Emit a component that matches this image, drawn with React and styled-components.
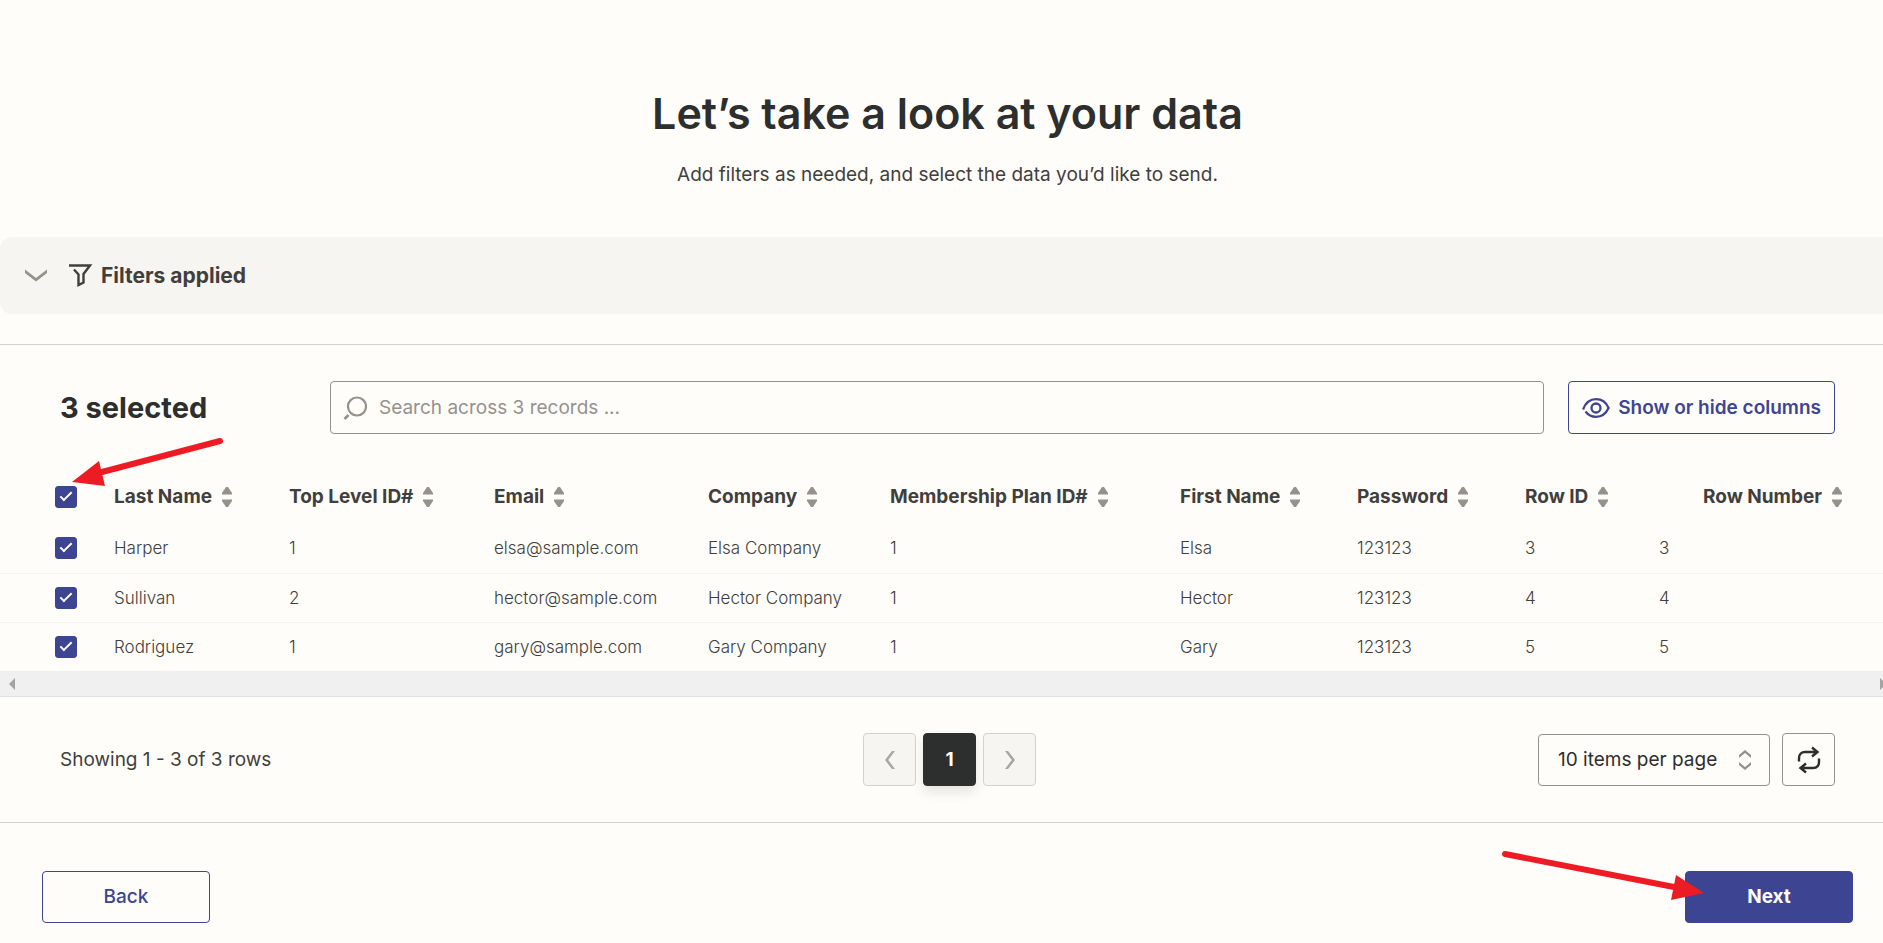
import React, { useState } from "react";
import styled, { createGlobalStyle } from "styled-components";

const colors = {
  page: "#fffdf9",
  panel: "#f6f5f2",
  ink: "#2d2e2e",
  text: "#403f3e",
  muted: "#95928e",
  line: "#d3d1cd",
  rowLine: "#f3f3f1",
  blue: "#3d4592",
  red: "#ed1c24",
};

const columns = [
  { key: "lastName", label: "Last Name", width: 175 },
  { key: "topLevelId", label: "Top Level ID#", width: 205 },
  { key: "email", label: "Email", width: 214 },
  { key: "company", label: "Company", width: 182 },
  { key: "planId", label: "Membership Plan ID#", width: 290 },
  { key: "firstName", label: "First Name", width: 177 },
  { key: "password", label: "Password", width: 168 },
  { key: "rowId", label: "Row ID", width: 134 },
  { key: "rowNumber", label: "Row Number", end: true },
];

const records = [
  { lastName: "Harper", topLevelId: 1, email: "elsa@sample.com", company: "Elsa Company", planId: 1, firstName: "Elsa", password: "123123", rowId: 3, rowNumber: 3 },
  { lastName: "Sullivan", topLevelId: 2, email: "hector@sample.com", company: "Hector Company", planId: 1, firstName: "Hector", password: "123123", rowId: 4, rowNumber: 4 },
  { lastName: "Rodriguez", topLevelId: 1, email: "gary@sample.com", company: "Gary Company", planId: 1, firstName: "Gary", password: "123123", rowId: 5, rowNumber: 5 },
];

const SortIcon = () => (
  <svg width="10" height="20" viewBox="0 0 10 20" fill="currentColor" aria-hidden="true">
    <path d="M4 0h2l4 6v1.500H0V6z" />
    <path d="M4 20h2l4-6v-1.500H0V14z" />
  </svg>
);

const App = () => {
  const [selected, setSelected] = useState(records.map((r) => r.rowId));
  const [search, setSearch] = useState("");
  const allSelected = selected.length === records.length;

  const toggle = (id) => {
    setSelected(selected.includes(id) ? selected.filter((s) => s !== id) : [...selected, id]);
  };

  return (
    <Viewport>
      <GlobalStyle />
      <Page>
        <Intro>
          <Title>Let’s take a look at your data</Title>
          <Subtitle>Add filters as needed, and select the data you’d like to send.</Subtitle>
        </Intro>
        <Filters type="button" aria-expanded="false">
          <Chevron width="22" height="13" viewBox="0 0 22 13" aria-hidden="true">
            <path d="M0 .5 11 9 22 .5V4L11 12.500 0 4z" fill="currentColor" />
          </Chevron>
          <svg width="24" height="23" viewBox="0 0 24 23" fill="none" stroke="currentColor" strokeWidth="2.4" aria-hidden="true">
            <path d="M0 1.500h21l-6.500 8.500v8.500l-5 2.500V10.500L5 5.500" />
          </svg>
          Filters applied
        </Filters>

        <DataSection>
          <Toolbar>
            <Count>{selected.length} selected</Count>
            <SearchBox>
              <svg width="24" height="24" viewBox="0 0 24 24" fill="none" stroke="currentColor" strokeWidth="2.2" aria-hidden="true">
                <circle cx="14" cy="10.500" r="9" />
                <path d="M5.500 19 1.500 23" strokeWidth="2.6" />
              </svg>
              <SearchInput
                type="text"
                aria-label="Search records"
                placeholder="Search across 3 records ..."
                value={search}
                onChange={(ev) => setSearch(ev.target.value)}
              />
            </SearchBox>
            <ColumnsButton type="button">
              <svg width="28" height="20" viewBox="0 0 28 20" fill="none" stroke="currentColor" strokeWidth="2.3" aria-hidden="true">
                <path d="M1 11.500C3.500 5 8.500 1.200 14 1.200S24 4 26.600 10C24 15.500 19.500 18.800 14 18.800c-4.500 0-8-2-10.500-5.300" />
                <circle cx="14" cy="10" r="4.500" />
              </svg>
              Show or hide columns
            </ColumnsButton>
          </Toolbar>

          <Table>
            <colgroup>
              <Col $width={114} />
              {columns.map((c) => (
                <Col key={c.key} $width={c.width} />
              ))}
            </colgroup>
            <thead>
              <tr>
                <CheckHead>
                  <Checkbox
                    aria-label="Select all rows"
                    checked={allSelected}
                    onChange={() => setSelected(allSelected ? [] : records.map((r) => r.rowId))}
                  />
                </CheckHead>
                {columns.map((c) => (
                  <Head key={c.key} $end={c.end}>
                    <SortButton type="button">
                      {c.label}
                      <SortIcon />
                    </SortButton>
                  </Head>
                ))}
              </tr>
            </thead>
            <tbody>
              {records.map((r) => (
                <Row key={r.rowId}>
                  <CheckCell>
                    <Checkbox
                      aria-label={`Select ${r.lastName}`}
                      checked={selected.includes(r.rowId)}
                      onChange={() => toggle(r.rowId)}
                    />
                  </CheckCell>
                  {columns.map((c) => (
                    <Cell key={c.key}>{r[c.key]}</Cell>
                  ))}
                </Row>
              ))}
            </tbody>
          </Table>
          <ScrollTrack>
            <svg width="6" height="12" viewBox="0 0 6 12" aria-hidden="true">
              <path d="M6 0v12L0 6z" fill="currentColor" />
            </svg>
            <svg width="6" height="12" viewBox="0 0 6 12" aria-hidden="true">
              <path d="M0 0v12l6-6z" fill="currentColor" />
            </svg>
          </ScrollTrack>
          {/* points at the select-all checkbox */}
          <SelectArrow width="160" height="60" viewBox="0 0 160 60" aria-hidden="true">
            <path d="M150 10 32 41" stroke={colors.red} strokeWidth="6" strokeLinecap="round" />
            <path d="M2 51 29 30l6 25z" fill={colors.red} />
          </SelectArrow>

          <Pagination>
            <span>Showing 1 - 3 of 3 rows</span>
            <Pages aria-label="Pages">
              <PageButton type="button" disabled aria-label="Previous page">
                <svg width="10" height="18" viewBox="0 0 10 18" aria-hidden="true">
                  <path d="M7 0h3L3.200 9l6.800 9H7L0 9z" fill="currentColor" />
                </svg>
              </PageButton>
              <PageButton type="button" $current aria-current="page">1</PageButton>
              <PageButton type="button" disabled aria-label="Next page">
                <svg width="10" height="18" viewBox="0 0 10 18" aria-hidden="true">
                  <path d="M3 0H0l6.800 9L0 18h3l7-9z" fill="currentColor" />
                </svg>
              </PageButton>
            </Pages>
            <PageSize>
              <SelectBox>
                <Select aria-label="Items per page" defaultValue="10">
                  <option value="10">10 items per page</option>
                  <option value="25">25 items per page</option>
                  <option value="50">50 items per page</option>
                </Select>
                <SelectIcon width="12" height="20" viewBox="0 0 12 20" fill="currentColor" aria-hidden="true">
                  <path d="M6 0l6 5v3L6 3 0 8V5z" />
                  <path d="M6 20l6-5v-3l-6 5-6-5v3z" />
                </SelectIcon>
              </SelectBox>
              <RefreshButton type="button" aria-label="Refresh">
                <svg width="24" height="28" viewBox="0 0 24 28" fill="none" stroke="currentColor" strokeWidth="2.4" aria-hidden="true">
                  <path d="M2 15.500V12c0-4 2.500-6 6-6h12.500M15 1.500 20.500 6 15 10.500" />
                  <path d="M22 12.500V16c0 4-2.500 6-6 6H3.500M9 17.500 3.500 22 9 26.500" />
                </svg>
              </RefreshButton>
            </PageSize>
          </Pagination>
        </DataSection>

        <Footer>
          <FooterButton type="button">Back</FooterButton>
          <NextWrap>
            <FooterButton type="button" $primary>Next</FooterButton>
            <NextArrow width="210" height="60" viewBox="0 0 210 60" aria-hidden="true">
              <path d="M9 12 178 45" stroke={colors.red} strokeWidth="6" strokeLinecap="round" />
              <path d="M208 51 180 33l-5 25z" fill={colors.red} />
            </NextArrow>
          </NextWrap>
        </Footer>
      </Page>
    </Viewport>
  );
};

const GlobalStyle = createGlobalStyle`
  * {
    box-sizing: border-box;
  }

  body {
    background: ${colors.page};
    color: ${colors.text};
    font-family: Inter, "Liberation Sans", sans-serif;
    font-size: 19px;
    line-height: 24px;
    margin: 0;
  }

  button, input, select {
    color: inherit;
    font: inherit;
  }

  svg {
    flex-shrink: 0;
  }
`;

const Viewport = styled.div`
  overflow-x: clip;
`;

// runs on behind the window's right edge
const Page = styled.main`
  margin-right: -12px;
`;

const Intro = styled.header`
  padding: 83px 20px 50px;
  text-align: center;
`;

const Title = styled.h1`
  color: ${colors.ink};
  font-size: 43px;
  font-weight: 600;
  line-height: 60px;
  margin: 0 0 20px;
`;

const Subtitle = styled.p`
  margin: 0;
`;

const Filters = styled.button`
  align-items: center;
  background: ${colors.panel};
  border: none;
  border-radius: 12px;
  display: flex;
  font-size: 21px;
  font-weight: 700;
  gap: 8px;
  height: 77px;
  padding: 0 25px;
  width: 100%;
`;

const Chevron = styled.svg`
  color: ${colors.muted};
  margin-right: 14px;
`;

const DataSection = styled.section`
  border-bottom: 1px solid ${colors.line};
  border-top: 1px solid ${colors.line};
  margin-top: 30px;
  position: relative;
`;

const Toolbar = styled.div`
  align-items: center;
  display: flex;
  gap: 24px;
  padding: 36px 60px 35px;
`;

const Count = styled.h2`
  color: ${colors.ink};
  font-size: 29px;
  font-weight: 700;
  line-height: 36px;
  margin: 0;
  width: 246px;
`;

const SearchBox = styled.label`
  align-items: center;
  border: 1px solid ${colors.muted};
  border-radius: 4px;
  color: ${colors.muted};
  display: flex;
  flex: 1;
  gap: 12px;
  height: 53px;
  padding: 0 12px;
`;

const SearchInput = styled.input`
  background: none;
  border: none;
  color: ${colors.text};
  flex: 1;
  outline: none;
  padding: 0;

  &::placeholder {
    color: ${colors.muted};
    opacity: 1;
  }
`;

const ColumnsButton = styled.button`
  align-items: center;
  background: none;
  border: 1px solid ${colors.blue};
  border-radius: 4px;
  color: ${colors.blue};
  display: flex;
  font-weight: 600;
  gap: 8px;
  height: 53px;
  padding: 0 13px;
`;

const Table = styled.table`
  border-collapse: collapse;
  table-layout: fixed;
  width: 100%;
`;

const Col = styled.col`
  width: ${(p) => (p.$width ? `${p.$width}px` : "auto")};
`;

const Head = styled.th`
  height: 55px;
  padding: 0 ${(p) => (p.$end ? "53px" : "0")} 0 0;
  text-align: ${(p) => (p.$end ? "right" : "left")};
`;

const CheckHead = styled(Head)`
  padding-left: 55px;
`;

const SortButton = styled.button`
  align-items: center;
  background: none;
  border: none;
  display: inline-flex;
  font-weight: 700;
  gap: 10px;
  padding: 0;
  vertical-align: middle;
  white-space: nowrap;

  svg {
    color: ${colors.muted};
  }
`;

const Row = styled.tr`
  & + & {
    border-top: 1px solid ${colors.rowLine};
  }
`;

const Cell = styled.td`
  font-size: 17px;
  font-weight: 300;
  height: 49px;
  padding: 0;
`;

const CheckCell = styled(Cell)`
  padding-left: 55px;
`;

const Checkbox = styled.input.attrs({ type: "checkbox" })`
  appearance: none;
  border: 1px solid ${colors.blue};
  border-radius: 3px;
  display: grid;
  height: 22px;
  margin: 0;
  place-items: center;
  width: 22px;

  &:checked {
    background: ${colors.blue};
  }

  &:checked::before {
    border: solid ${colors.page};
    border-width: 0 0 2px 2px;
    content: "";
    height: 4px;
    margin-bottom: 4px;
    transform: rotate(-45deg);
    width: 10px;
  }
`;

const ScrollTrack = styled.div`
  align-items: center;
  background: #f0f0f0;
  border-bottom: 1px solid #e2e2e2;
  color: #a3a3a3;
  display: flex;
  height: 26px;
  justify-content: space-between;
  padding: 0 9px;
`;

const SelectArrow = styled.svg`
  left: 70px;
  pointer-events: none;
  position: absolute;
  top: 86px;
`;

const Pagination = styled.div`
  align-items: center;
  display: grid;
  grid-template-columns: 1fr auto 1fr;
  padding: 36px 60px;
`;

const Pages = styled.nav`
  display: flex;
  gap: 7px;
  margin-left: 4px;
`;

const PageButton = styled.button`
  align-items: center;
  background: ${(p) => (p.$current ? colors.ink : colors.panel)};
  border: 1px solid ${(p) => (p.$current ? colors.ink : colors.line)};
  border-radius: 4px;
  box-shadow: ${(p) => (p.$current ? "0 6px 12px rgba(45, 46, 46, 0.12)" : "none")};
  color: ${(p) => (p.$current ? colors.page : "#a8a5a2")};
  display: flex;
  font-weight: 700;
  height: 53px;
  justify-content: center;
  padding: 0;
  width: 53px;
`;

const PageSize = styled.div`
  display: flex;
  gap: 12px;
  justify-content: flex-end;
`;

const SelectBox = styled.div`
  align-items: center;
  display: flex;
  position: relative;
`;

const Select = styled.select`
  appearance: none;
  background: none;
  border: 1px solid ${colors.muted};
  border-radius: 4px;
  color: ${colors.ink};
  height: 52px;
  padding: 0 19px;
  width: 232px;
`;

const SelectIcon = styled.svg`
  color: ${colors.muted};
  pointer-events: none;
  position: absolute;
  right: 19px;
`;

const RefreshButton = styled.button`
  align-items: center;
  background: none;
  border: 1px solid ${colors.muted};
  border-radius: 4px;
  color: ${colors.ink};
  display: flex;
  height: 53px;
  justify-content: center;
  padding: 0;
  width: 53px;
`;

const Footer = styled.footer`
  display: flex;
  justify-content: space-between;
  padding: 48px 42px 20px;
`;

const FooterButton = styled.button`
  background: ${(p) => (p.$primary ? colors.blue : "none")};
  border: 1px solid ${colors.blue};
  border-radius: 4px;
  color: ${(p) => (p.$primary ? colors.page : colors.blue)};
  font-weight: ${(p) => (p.$primary ? 700 : 500)};
  height: 52px;
  width: 168px;
`;

const NextWrap = styled.div`
  position: relative;
`;

const NextArrow = styled.svg`
  bottom: 21px;
  pointer-events: none;
  position: absolute;
  right: 147px;
`;

export default App;
